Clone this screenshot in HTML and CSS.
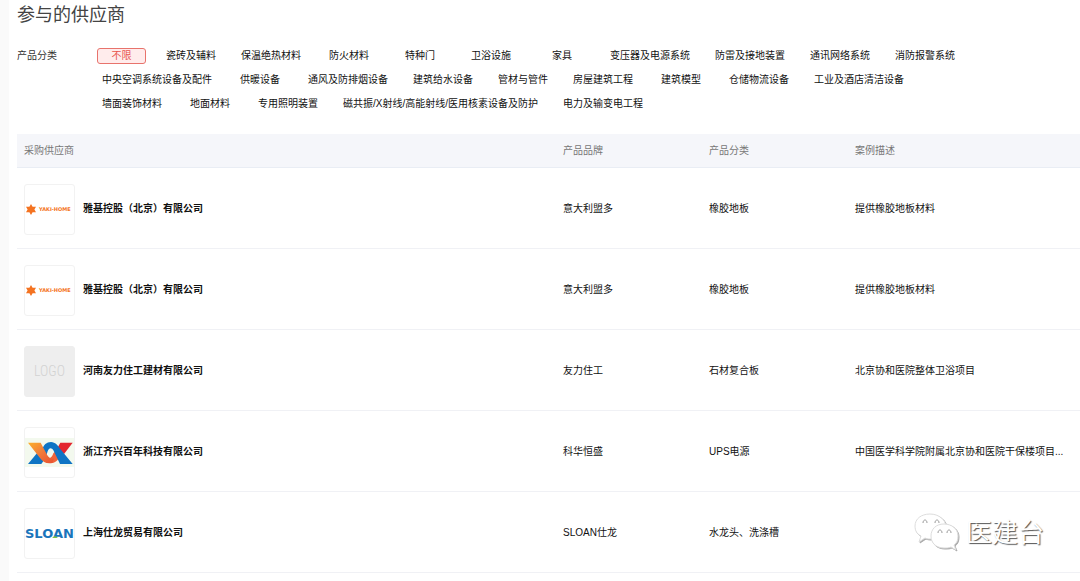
FILE: index.html
```
<!DOCTYPE html>
<html lang="zh-CN">
    <head>
        <meta charset="UTF-8">
        <title>参与的供应商</title>
        <link rel="stylesheet" href="styles.css">
    </head>

    <body>
        <main class="page">
            <h1 class="title">参与的供应商</h1>

            <section class="filter">
                <h2 class="filter-label" id="filter-label">产品分类</h2>
                <div class="filter-list" role="group" aria-labelledby="filter-label">
                    <button type="button" class="tag active">不限</button>
                    <button type="button" class="tag">瓷砖及辅料</button>
                    <button type="button" class="tag">保温绝热材料</button>
                    <button type="button" class="tag">防火材料</button>
                    <button type="button" class="tag">特种门</button>
                    <button type="button" class="tag">卫浴设施</button>
                    <button type="button" class="tag">家具</button>
                    <button type="button" class="tag">变压器及电源系统</button>
                    <button type="button" class="tag">防雷及接地装置</button>
                    <button type="button" class="tag">通讯网络系统</button>
                    <button type="button" class="tag">消防报警系统</button>
                    <button type="button" class="tag">中央空调系统设备及配件</button>
                    <button type="button" class="tag">供暖设备</button>
                    <button type="button" class="tag">通风及防排烟设备</button>
                    <button type="button" class="tag">建筑给水设备</button>
                    <button type="button" class="tag">管材与管件</button>
                    <button type="button" class="tag">房屋建筑工程</button>
                    <button type="button" class="tag">建筑模型</button>
                    <button type="button" class="tag">仓储物流设备</button>
                    <button type="button" class="tag">工业及酒店清洁设备</button>
                    <button type="button" class="tag">墙面装饰材料</button>
                    <button type="button" class="tag">地面材料</button>
                    <button type="button" class="tag">专用照明装置</button>
                    <button type="button" class="tag">磁共振/X射线/高能射线/医用核素设备及防护</button>
                    <button type="button" class="tag">电力及输变电工程</button>
                </div>
            </section>

            <table class="suppliers">
                <colgroup>
                    <col>
                    <col class="col-brand">
                    <col class="col-type">
                    <col class="col-case">
                </colgroup>
                <thead>
                    <tr>
                        <th>采购供应商</th>
                        <th>产品品牌</th>
                        <th>产品分类</th>
                        <th>案例描述</th>
                    </tr>
                </thead>
                <tbody>
                    <tr>
                        <td>
                            <div class="supplier">
                                <span class="logo">
                                    <svg viewBox="0 0 49 49">
                                        <path fill="#f47321" d="M6 19l1.600 2.700h3.400l-1.600 2.800 1.600 2.800H7.600L6 30l-1.600-2.700H1l1.600-2.800L1 21.700h3.400z"/>
                                        <text class="yaki" x="14" y="26">YAKI-HOME</text>
                                    </svg>
                                </span>
                                <a href="#" class="name">雅基控股（北京）有限公司</a>
                            </div>
                        </td>
                        <td>意大利盟多</td>
                        <td>橡胶地板</td>
                        <td>提供橡胶地板材料</td>
                    </tr>
                    <tr>
                        <td>
                            <div class="supplier">
                                <span class="logo">
                                    <svg viewBox="0 0 49 49">
                                        <path fill="#f47321" d="M6 19l1.600 2.700h3.400l-1.600 2.800 1.600 2.800H7.600L6 30l-1.600-2.700H1l1.600-2.800L1 21.700h3.400z"/>
                                        <text class="yaki" x="14" y="26">YAKI-HOME</text>
                                    </svg>
                                </span>
                                <a href="#" class="name">雅基控股（北京）有限公司</a>
                            </div>
                        </td>
                        <td>意大利盟多</td>
                        <td>橡胶地板</td>
                        <td>提供橡胶地板材料</td>
                    </tr>
                    <tr>
                        <td>
                            <div class="supplier">
                                <span class="logo logo-empty">LOGO</span>
                                <a href="#" class="name">河南友力住工建材有限公司</a>
                            </div>
                        </td>
                        <td>友力住工</td>
                        <td>石材复合板</td>
                        <td>北京协和医院整体卫浴项目</td>
                    </tr>
                    <tr>
                        <td>
                            <div class="supplier">
                                <span class="logo">
                                    <svg viewBox="0 0 147 147">
                                        <defs>
                                            <linearGradient id="warm" x1="0" y1="0" x2="1" y2="1">
                                                <stop offset="0" stop-color="#fbb02d"/>
                                                <stop offset=".5" stop-color="#f27a3a"/>
                                                <stop offset="1" stop-color="#e8502f"/>
                                            </linearGradient>
                                        </defs>
                                        <path fill="#f3f9ee" d="M0 30h147v87H0z"/>
                                        <path fill="#0f74c4" d="M9 108l28-34 22 20-10 14z"/>
                                        <path fill="#e3262e" d="M106 44h37l-26 34-20-18z"/>
                                        <path fill="#f0643a" d="M64 86c8 8 17 4 21-10l10-10 10 18c-6 16-18 23-32 21-14-1-20-8-26-18z"/>
                                        <path fill="#0f74c4" d="M51 68c4-18 14-26 27-26 13 1 20 9 26 19l39 47h-38L86 68c-7-10-14-9-18 2l-4 12z"/>
                                        <path fill="url(#warm)" d="M9 44h38l20 38c6 9 12 12 20 9l-5 14c-16 3-28-2-37-15z"/>
                                    </svg>
                                </span>
                                <a href="#" class="name">浙江齐兴百年科技有限公司</a>
                            </div>
                        </td>
                        <td>科华恒盛</td>
                        <td>UPS电源</td>
                        <td>中国医学科学院附属北京协和医院干保楼项目...</td>
                    </tr>
                    <tr>
                        <td>
                            <div class="supplier">
                                <span class="logo">
                                    <svg viewBox="0 0 49 49">
                                        <text class="sloan" x="0" y="29">SLOAN</text>
                                        <path fill="#7dc242" d="M27 29l3-2 3 2z"/>
                                    </svg>
                                </span>
                                <a href="#" class="name">上海仕龙贸易有限公司</a>
                            </div>
                        </td>
                        <td>SLOAN仕龙</td>
                        <td>水龙头、洗涤槽</td>
                        <td></td>
                    </tr>
                </tbody>
            </table>
        </main>

        <div class="watermark">
            <svg class="wechat" viewBox="0 0 46 40">
                <path d="M16 1C7 1 1 6 1 13c0 5 2 8 6 10l-2 6 6-4c2 1 4 1 7 1 8 0 14-5 14-12S25 1 16 1z"/>
                <path d="M30 11c-8 0-13 5-13 12s5 12 13 12c3 0 5 0 7-1l5 3-2-5c3-2 4-5 4-9 0-7-6-12-14-12z"/>
                <path class="eye" d="M9 10c0-4 4-4 4 0M21 10c0-4 4-4 4 0M24 20c0-4 4-4 4 0M33 20c0-4 4-4 4 0"/>
            </svg>
            <span>医建台</span>
        </div>
    </body>
</html>
```
FILE: styles.css
```
* {
    padding: 0;
    margin: 0;
    box-sizing: border-box;
}

body {
    background: #fafafa;
    color: #111;
    font-family: "Liberation Sans", "Noto Sans CJK SC", sans-serif;
    font-size: 10px;
    line-height: 16px;
    overflow: hidden;
}

.page {
    margin-left: 9px;
    padding: 2px 0 0 8px;
    min-height: 100vh;
    background: white;
}

.title {
    font-size: 18px;
    font-weight: 400;
    line-height: 26px;
    color: #444;
}

/* category filter */
.filter {
    display: flex;
    margin-top: 20px;
    padding-right: 110px;
}

.filter-label {
    flex: 0 0 80px;
    font-size: 10px;
    font-weight: 400;
    color: #333;
}

.filter-list {
    display: flex;
    flex-wrap: wrap;
    gap: 8px 15px;
}

.tag {
    min-width: 56px;
    height: 16px;
    padding: 0 5px;
    border: 0;
    background: none;
    color: #111;
    font: inherit;
    white-space: nowrap;
    cursor: pointer;
}

.tag.active {
    min-width: 49px;
    border: 1px solid #e8736c;
    border-radius: 3px;
    background: #ffecec;
    color: #e8544c;
    line-height: 14px;
}

/* supplier table */
.suppliers {
    width: 100%;
    margin-top: 22px;
    table-layout: fixed;
    border-collapse: separate;
    border-spacing: 0;
}

.col-brand, .col-type {
    width: 146px;
}

.col-case {
    width: 232px;
}

th, td {
    padding: 0 7px;
    text-align: left;
    border-bottom: 1px solid #f0f1f5;
    white-space: nowrap;
}

th {
    height: 34px;
    background: #f5f6fa;
    border-bottom-color: #e9edf4;
    color: #777;
    font-weight: 400;
}

td {
    height: 81px;
    padding-top: 2px;
}

.supplier {
    display: flex;
    align-items: center;
    gap: 8px;
}

.name {
    color: #111;
    font-weight: 700;
    text-decoration: none;
}

.logo {
    display: flex;
    width: 51px;
    height: 51px;
    border: 1px solid #f2f2f2;
    border-radius: 3px;
    overflow: hidden;
}

.logo svg {
    width: 100%;
    height: 100%;
}

.logo-empty {
    align-items: center;
    justify-content: center;
    background: #eee;
    border-color: #eee;
    color: #d2d2d2;
    font-family: "Roboto Condensed", Roboto, sans-serif;
    font-size: 14px;
    font-weight: 300;
}

.yaki {
    fill: #f47321;
    font: 700 5px "DejaVu Sans", sans-serif;
}

.sloan {
    fill: #1a75bb;
    font: 700 13px "DejaVu Sans", sans-serif;
}

/* account mark over the lower right corner */
.watermark {
    position: absolute;
    right: 36px;
    bottom: 28px;
    display: flex;
    align-items: center;
    gap: 6px;
    color: white;
    font-size: 26px;
    font-weight: 400;
    line-height: 40px;
    text-shadow: 1px 1px 1px #555;
}

.wechat {
    width: 46px;
    height: 40px;
    fill: white;
    stroke: #ddd;
    filter: drop-shadow(1px 1px 0 #aaa);
}

.wechat .eye {
    stroke: #999;
}
```
